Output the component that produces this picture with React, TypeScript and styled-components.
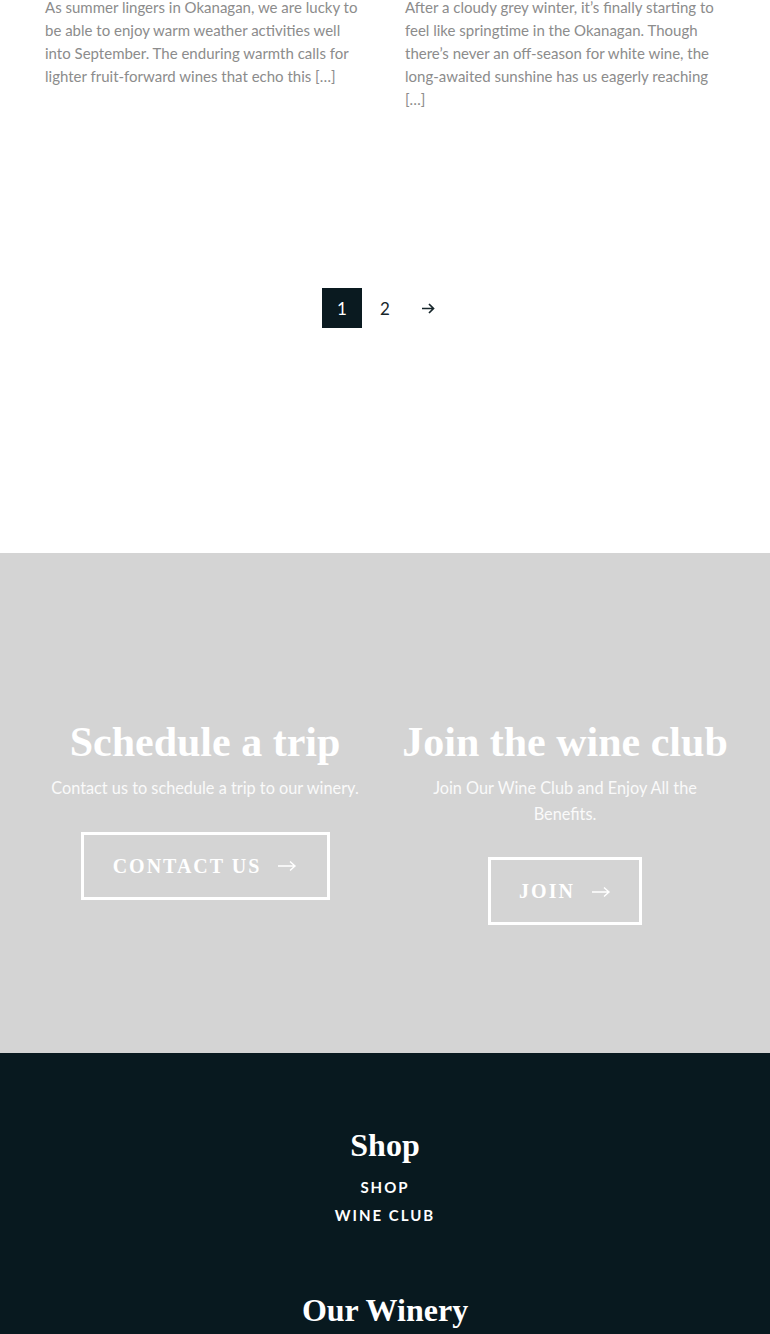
import React from "react";
import styled, { createGlobalStyle } from "styled-components";

const Global = createGlobalStyle`
  html, body { margin: 0; padding: 0; background: #fff; }
  body { font-family: Lato, "Open Sans", sans-serif; overflow-x: hidden; }
  * { box-sizing: border-box; }
`;

const Articles = styled.section`
  display: grid;
  grid-template-columns: 320px 320px;
  column-gap: 40px;
  padding: 0 45px;
  margin-top: -4px;
`;

const Excerpt = styled.p`
  margin: 0;
  font-family: Lato, sans-serif;
  font-size: 15px;
  line-height: 23px;
  color: #8c8c8c;
`;

const Pager = styled.nav`
  display: flex;
  justify-content: center;
  gap: 3px;
  margin: 177px 0 225px;
`;

const PageItem = styled.a<{ $active?: boolean }>`
  width: 40px;
  height: 40px;
  display: flex;
  align-items: center;
  justify-content: center;
  font-family: Lato, sans-serif;
  font-size: 17px;
  color: ${(p) => (p.$active ? "#fff" : "#17262b")};
  background: ${(p) => (p.$active ? "#0a1a20" : "transparent")};
`;

const CtaSection = styled.section`
  height: 500px;
  background: #d4d4d4;
  padding: 162px 25px 0;
  display: grid;
  grid-template-columns: 360px 360px;
  align-items: start;
`;

const CtaCol = styled.div`
  display: flex;
  flex-direction: column;
  align-items: center;
  text-align: center;
`;

const CtaTitle = styled.h2`
  margin: 0;
  font-family: "Liberation Serif", "DejaVu Serif", serif;
  font-weight: 700;
  font-size: 42px;
  line-height: 54px;
  color: #fff;
  white-space: nowrap;
`;

const CtaText = styled.p`
  margin: 6px 0 0;
  max-width: 316px;
  font-family: Lato, sans-serif;
  font-weight: 400;
  font-size: 16.3px;
  line-height: 25.5px;
  color: #fafafa;
`;

const CtaButton = styled.a<{ $w: number }>`
  margin-top: 31px;
  width: ${(p) => p.$w}px;
  height: 68px;
  border: 3px solid #fff;
  display: flex;
  align-items: center;
  justify-content: center;
  gap: 16px;
  font-family: "Liberation Serif", "DejaVu Serif", serif;
  font-weight: 700;
  font-size: 20px;
  letter-spacing: 2px;
  color: #fff;
  padding-top: 1px;
`;

const Footer = styled.footer`
  background: #08191f;
  padding: 72px 0 0;
  height: 281px;
  display: flex;
  flex-direction: column;
  align-items: center;
`;

const FooterTitle = styled.h3<{ $mt?: number }>`
  margin: ${(p) => p.$mt ?? 0}px 0 0;
  font-family: "Liberation Serif", "DejaVu Serif", serif;
  font-weight: 700;
  font-size: 32px;
  line-height: 40px;
  color: #fff;
`;

const FooterLinks = styled.ul`
  list-style: none;
  margin: 8px 0 0;
  padding: 0;
  display: flex;
  flex-direction: column;
  align-items: center;
`;

const FooterLink = styled.li`
  font-family: Lato, sans-serif;
  font-weight: 700;
  font-size: 15px;
  line-height: 28px;
  letter-spacing: 2px;
  color: #fff;
`;

const LongArrow = () => (
  <svg width="20" height="12" viewBox="0 0 20 12" fill="none" stroke="#fff" strokeWidth="1.4">
    <path d="M1 6h17M13 1.5L18 6l-5 4.5" />
  </svg>
);

const SmallArrow = () => (
  <svg width="15" height="13" viewBox="0 0 15 13" fill="none" stroke="#17262b" strokeWidth="1.7">
    <path d="M1 6.5h12M8 2l4.5 4.5L8 11" />
  </svg>
);

export default function App() {
  return (
    <>
      <Global />
      <Articles>
        <Excerpt>
          As summer lingers in Okanagan, we are lucky to be able to enjoy warm weather
          activities well into September. The enduring warmth calls for lighter
          fruit-forward wines that echo this […]
        </Excerpt>
        <Excerpt>
          After a cloudy grey winter, it’s finally starting to feel like springtime in
          the Okanagan. Though there’s never an off-season for white wine, the
          long-awaited sunshine has us eagerly reaching […]
        </Excerpt>
      </Articles>
      <Pager>
        <PageItem $active>1</PageItem>
        <PageItem>2</PageItem>
        <PageItem>
          <SmallArrow />
        </PageItem>
      </Pager>
      <CtaSection>
        <CtaCol>
          <CtaTitle>Schedule a trip</CtaTitle>
          <CtaText>Contact us to schedule a trip to our winery.</CtaText>
          <CtaButton $w={249}>
            CONTACT US <LongArrow />
          </CtaButton>
        </CtaCol>
        <CtaCol>
          <CtaTitle>Join the wine club</CtaTitle>
          <CtaText>Join Our Wine Club and Enjoy All the Benefits.</CtaText>
          <CtaButton $w={154}>
            JOIN <LongArrow />
          </CtaButton>
        </CtaCol>
      </CtaSection>
      <Footer>
        <FooterTitle>Shop</FooterTitle>
        <FooterLinks>
          <FooterLink>SHOP</FooterLink>
          <FooterLink>WINE CLUB</FooterLink>
        </FooterLinks>
        <FooterTitle $mt={61}>Our Winery</FooterTitle>
      </Footer>
    </>
  );
}
